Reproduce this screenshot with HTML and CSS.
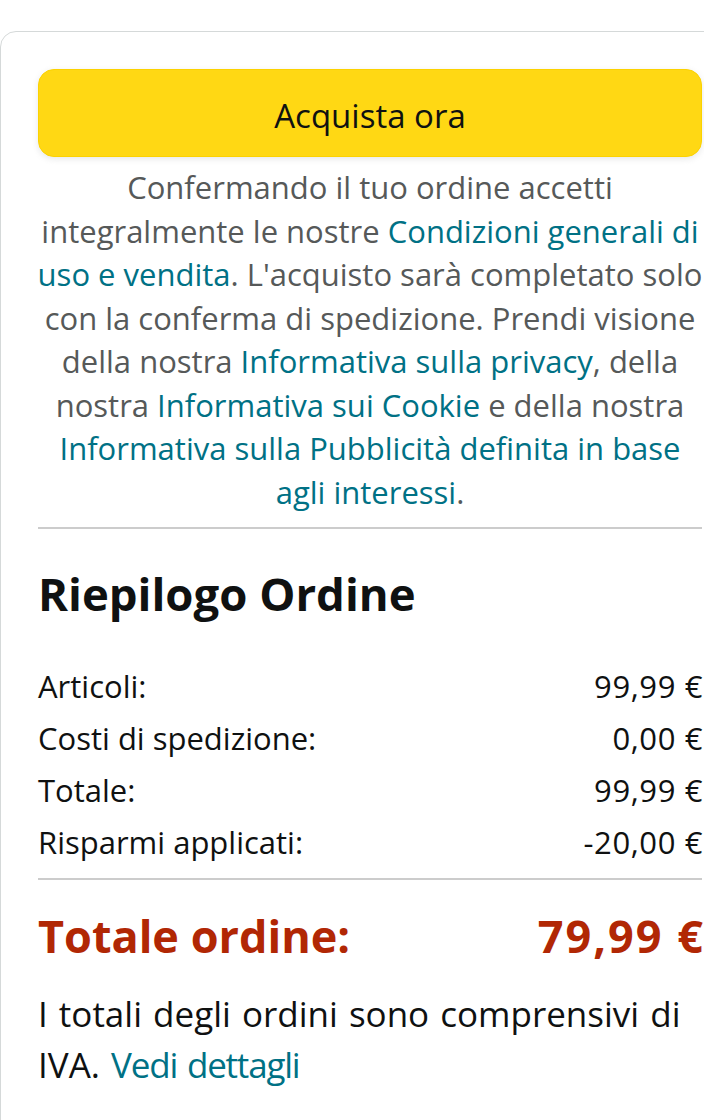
FILE: index.html
```html
<!DOCTYPE html>
<html lang="it">
<head>
<meta charset="utf-8">
<title>Riepilogo Ordine</title>
<link rel="stylesheet" href="styles.css">
</head>
<body>
<div class="card">
  <button class="buy-btn" type="button">Acquista ora</button>
  <p class="legal">Confermando il tuo ordine accetti integralmente le nostre <a href="#">Condizioni generali di uso e vendita</a>. L'acquisto sarà completato solo con la conferma di spedizione. Prendi visione della nostra <a href="#">Informativa sulla privacy</a>, della nostra <a href="#">Informativa sui Cookie</a> e della nostra <a href="#">Informativa sulla Pubblicità definita in base agli interessi</a>.</p>
  <hr class="divider">
  <h2 class="summary-title">Riepilogo Ordine</h2>
  <ul class="rows">
    <li class="row"><span>Articoli:</span><span class="amount">99,99 €</span></li>
    <li class="row"><span>Costi di spedizione:</span><span class="amount">0,00 €</span></li>
    <li class="row"><span>Totale:</span><span class="amount">99,99 €</span></li>
    <li class="row"><span>Risparmi applicati:</span><span class="amount">-20,00 €</span></li>
  </ul>
  <hr class="divider divider-rows">
  <div class="grand-total"><span>Totale ordine:</span><span class="amount">79,99 €</span></div>
  <p class="vat">I totali degli ordini sono comprensivi di IVA. <a href="#">Vedi dettagli</a></p>
</div>
</body>
</html>
```
FILE: styles.css
```css
html, body {
  margin: 0;
  padding: 0;
  background: #ffffff;
  overflow: hidden;
}
body {
  font-family: "Open Sans", "Noto Sans", Arial, sans-serif;
  color: #0f1111;
}
.card {
  margin-top: 31px;
  width: 740px;
  border: 1px solid #d5d9d9;
  border-radius: 16px 0 0 0;
  padding: 37px 0 40px 37px;
  box-sizing: border-box;
}
.card > * {
  width: 664px;
}
.buy-btn {
  display: block;
  height: 88px;
  margin: 0;
  border: 1px solid #fcd200;
  border-radius: 16px;
  background: #ffd814;
  box-shadow: 0 2px 6px rgba(213, 217, 217, 0.6);
  font-family: inherit;
  font-size: 33px;
  color: #0f1111;
  padding: 5px 0 0;
}
.card > .legal {
  width: 676px;
  margin: 9px 0 0 -6px;
  text-align: center;
  font-size: 31px;
  line-height: 43.5px;
  color: #565959;
}
a {
  color: #007185;
  text-decoration: none;
}
.divider {
  border: none;
  border-top: 2px solid #cccccc;
  margin: 13px 0 0;
  height: 0;
}
.summary-title {
  margin: 36px 0 0;
  font-size: 45.5px;
  line-height: 56px;
  font-weight: 700;
}
.rows {
  list-style: none;
  margin: 39px 0 0;
  padding: 0;
}
.row {
  display: flex;
  justify-content: space-between;
  font-size: 31px;
  line-height: 52px;
}
.row .amount {
  letter-spacing: 0.6px;
  margin-right: -1px;
}
.divider-rows {
  margin-top: 10px;
}
.grand-total {
  display: flex;
  justify-content: space-between;
  margin-top: 28px;
  font-size: 45px;
  line-height: 56px;
  font-weight: 700;
  color: #b12704;
}
.grand-total .amount {
  letter-spacing: 2px;
  margin-right: -3px;
}
.vat {
  margin: 24px 0 0;
  font-size: 35px;
  line-height: 51px;
  word-spacing: 2px;
}
.vat a {
  letter-spacing: -1.2px;
}
```
